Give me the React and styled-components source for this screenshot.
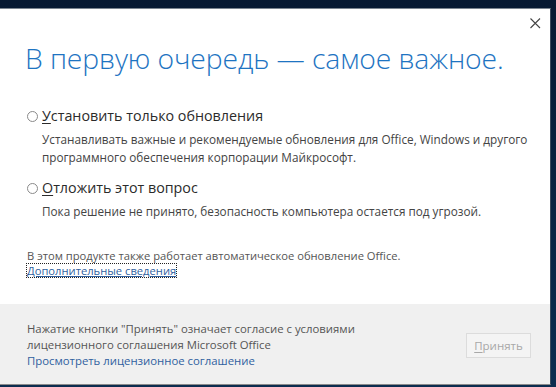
import React from "react";
import styled, { createGlobalStyle } from "styled-components";

const GlobalStyle = createGlobalStyle`
  html, body {
    margin: 0;
    padding: 0;
    background: #0b2747;
    font-family: "Open Sans", "Liberation Sans", sans-serif;
  }
`;

const Desktop = styled.div`
  width: 556px;
  height: 387px;
  padding-top: 8px;
  box-sizing: border-box;
  background: linear-gradient(180deg, #071a33 0%, #0c2c4f 100%);
  overflow: hidden;
`;

const Dialog = styled.div`
  position: relative;
  width: 551px;
  height: 377px;
  background: #ffffff;
  border-top: 1px solid #7a8590;
  border-right: 1px solid #3b4a5c;
  border-bottom: 1px solid #8b8b8b;
  box-sizing: border-box;
  display: flex;
  flex-direction: column;
`;

const Close = styled.button`
  position: absolute;
  top: 8px;
  right: 9px;
  width: 12px;
  height: 12px;
  padding: 0;
  margin: 0;
  border: none;
  background: transparent;
  line-height: 0;
  cursor: pointer;

  svg {
    display: block;
  }
`;

const Body = styled.div`
  flex: 1;
  padding: 30px 0 0 25px;
`;

const Title = styled.h1`
  margin: 0;
  font-weight: 300;
  font-size: 28.3px;
  line-height: 38px;
  color: #1e74c2;
  letter-spacing: -0.1px;
`;

const Options = styled.div`
  margin-top: 29px;
  display: flex;
  flex-direction: column;
  gap: 12px;
`;

const Option = styled.div`
  display: flex;
  flex-direction: column;
`;

const OptionLabel = styled.label`
  display: flex;
  align-items: center;
  gap: 4px;
  font-size: 14.3px;
  line-height: 20px;
  color: #2b2b2b;
`;

const Radio = styled.span`
  width: 9px;
  height: 9px;
  margin-left: 2px;
  border: 1px solid #8a8a8a;
  border-radius: 50%;
  flex-shrink: 0;
`;

const Key = styled.span`
  text-decoration: underline;
  text-underline-offset: 2px;
`;

const Description = styled.p`
  margin: 4px 0 0 17px;
  font-size: 11.75px;
  line-height: 18px;
  color: #444444;
`;

const Note = styled.div`
  margin-top: 28px;
  padding-left: 2px;
  font-size: 11.2px;
  line-height: 15px;
  color: #555555;
`;

const MoreLink = styled.a`
  display: inline-block;
  margin-top: 1px;
  outline: 1px dotted #222;
  outline-offset: 0;
  color: #2f5f9f;
  text-decoration: underline;
  line-height: 13px;
`;

const Footer = styled.div`
  height: 80px;
  background: #f0f0f0;
  display: flex;
  align-items: center;
  justify-content: space-between;
  padding: 0 19px 0 27px;
`;

const Legal = styled.div`
  font-size: 11.35px;
  line-height: 16px;
  color: #555555;
  padding-top: 2px;
`;

const LegalLink = styled.a`
  display: block;
  color: #2f5f9f;
  text-decoration: none;
`;

const AcceptButton = styled.button`
  width: 65px;
  height: 25px;
  margin-top: 2px;
  border: 1px solid #dcdcdc;
  background: #f4f4f4;
  color: #a8a8a8;
  font-family: inherit;
  font-size: 11.5px;
  padding: 0;
`;

const options = [
  {
    key: "У",
    rest: "становить только обновления",
    text: [
      "Устанавливать важные и рекомендуемые обновления для Office, Windows и другого",
      "программного обеспечения корпорации Майкрософт.",
    ],
  },
  {
    key: "О",
    rest: "тложить этот вопрос",
    text: ["Пока решение не принято, безопасность компьютера остается под угрозой."],
  },
];

export default function App() {
  return (
    <>
      <GlobalStyle />
      <Desktop>
        <Dialog>
          <Close aria-label="Закрыть">
            <svg width="12" height="12" viewBox="0 0 12 12">
              <path d="M1.5 1.5L11 11M11 1.5L1.5 11" stroke="#444" strokeWidth="1.1" fill="none" />
            </svg>
          </Close>
          <Body>
            <Title>В первую очередь — самое важное.</Title>
            <Options>
              {options.map((o) => (
                <Option key={o.key}>
                  <OptionLabel>
                    <Radio />
                    <span>
                      <Key>{o.key}</Key>
                      {o.rest}
                    </span>
                  </OptionLabel>
                  <Description>
                    {o.text.map((line) => (
                      <React.Fragment key={line}>
                        {line}
                        <br />
                      </React.Fragment>
                    ))}
                  </Description>
                </Option>
              ))}
            </Options>
            <Note>
              В этом продукте также работает автоматическое обновление Office.
              <br />
              <MoreLink href="#">Дополнительные сведения</MoreLink>
            </Note>
          </Body>
          <Footer>
            <Legal>
              Нажатие кнопки "Принять" означает согласие с условиями
              <br />
              лицензионного соглашения Microsoft Office
              <LegalLink href="#">Просмотреть лицензионное соглашение</LegalLink>
            </Legal>
            <AcceptButton disabled>
              <Key>П</Key>ринять
            </AcceptButton>
          </Footer>
        </Dialog>
      </Desktop>
    </>
  );
}
